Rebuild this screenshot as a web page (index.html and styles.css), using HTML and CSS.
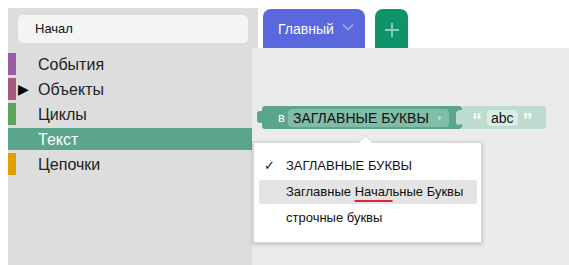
FILE: index.html
```html
<!DOCTYPE html>
<html>
<head>
<meta charset="UTF-8">
<title>Blocks editor</title>
<link rel="stylesheet" href="styles.css">
</head>
<body>
<div class="app">
  <div class="top">
    <div class="search-area">
      <div class="search">Начал</div>
    </div>
    <div class="tabs">
      <div class="tab tab-main">Главный
        <svg class="chev" width="12" height="8" viewBox="0 0 12 8"><path d="M1 1.5 L6 6.5 L11 1.5" fill="none" stroke="#a9b0ef" stroke-width="1.4"/></svg>
      </div>
      <div class="tab tab-add">
        <svg width="14" height="14" viewBox="0 0 14 14"><path d="M7 0 V14 M0 7 H14" stroke="#8fd3b9" stroke-width="1.8"/></svg>
      </div>
    </div>
  </div>
  <div class="main">
    <div class="toolbox">
      <div class="cat cat-events">События</div>
      <div class="cat cat-objects"><span class="arrow">&#9654;</span>Объекты</div>
      <div class="cat cat-loops">Циклы</div>
      <div class="cat cat-text selected">Текст</div>
      <div class="cat cat-chains">Цепочки</div>
    </div>
    <div class="workspace">
      <div class="block">
        <div class="block-tab"></div>
        <span class="label">в</span>
        <span class="dropdown">ЗАГЛАВНЫЕ БУКВЫ<span class="caret">&#9662;</span></span>
        <div class="slot"></div>
        <div class="text-block">
          <div class="text-tab"></div>
          <span class="quote">&#8220;</span>
          <span class="field">abc</span>
          <span class="quote">&#8221;</span>
        </div>
      </div>
      <div class="menu">
        <div class="menu-arrow"></div>
        <div class="item"><span class="check">&#10003;</span>ЗАГЛАВНЫЕ БУКВЫ</div>
        <div class="item hover">Заглавные <span class="match">Начал</span>ьные Буквы</div>
        <div class="item">строчные буквы</div>
      </div>
    </div>
  </div>
</div>
</body>
</html>
```

FILE: styles.css
```css
html, body {
	margin: 0;
	height: 100%;
	background-color: #fff;
	font-family: "Liberation Sans", Arial, Helvetica, sans-serif;
}

.app {
	display: flex;
	flex-direction: column;
	height: 100%;
	padding: 8px 0 0 8px;
	box-sizing: border-box;
}

/* top row: search + tabs */
.top {
	display: flex;
	height: 40px;
}

.search-area {
	width: 250px;
	background-color: #ddd;
	padding: 7px 10px 5px 10px;
	box-sizing: border-box;
}

.search {
	height: 28px;
	line-height: 28px;
	background-color: #f4f4f4;
	border-radius: 5px;
	padding-left: 17px;
	font-size: 13px;
	color: #111;
}

.tabs {
	display: flex;
	gap: 10px;
	margin-left: 5px;
	padding-top: 1px;
}

.tab {
	height: 39px;
	border-radius: 8px 8px 0 0;
	display: flex;
	align-items: center;
	box-sizing: border-box;
}

.tab-main {
	width: 102px;
	background-color: #5b67dd;
	color: #fff;
	font-size: 14px;
	padding-left: 15px;
}

.chev {
	margin-left: 8px;
	margin-top: -3px;
}

.tab-add {
	width: 33px;
	background-color: #0e936b;
	justify-content: center;
	padding-top: 2px;
}

/* bottom row: toolbox + workspace */
.main {
	flex: 1;
	display: flex;
}

.toolbox {
	width: 244px;
	background-color: #ddd;
	padding-top: 5px;
}

.cat {
	height: 22px;
	line-height: 23px;
	margin-bottom: 3px;
	padding-left: 22px;
	border-left: 8px solid;
	font-size: 16px;
	color: #222;
	position: relative;
}

.cat-events { border-color: #995ba5; }
.cat-objects { border-color: #a55b80; }
.cat-loops { border-color: #5ba55b; }
.cat-chains { border-color: #e0a100; }

.cat.selected {
	border-color: #5ba58c;
	background-color: #5ba58c;
	color: #fff;
}

.arrow {
	position: absolute;
	left: 2px;
	font-size: 14px;
	color: #000;
}

.workspace {
	flex: 1;
	background-color: #ebebeb;
	position: relative;
}

/* block on the canvas */
.block {
	position: absolute;
	left: 10px;
	top: 58px;
	height: 23px;
	width: 200px;
	background-color: #5ba58c;
	border-radius: 3px;
	display: flex;
	align-items: center;
}

.block-tab {
	position: absolute;
	left: -5px;
	top: 5px;
	width: 6px;
	height: 12px;
	background-color: #5ba58c;
	border-radius: 3px 0 0 3px;
}

.label {
	color: #fff;
	font-size: 13px;
	margin-left: 16px;
	width: 10px;
}

.dropdown {
	height: 18px;
	line-height: 18px;
	width: 161px;
	box-sizing: border-box;
	background-color: #80bca8;
	border-radius: 4px;
	padding-left: 5px;
	font-size: 14px;
	color: #111;
	position: relative;
}

.caret {
	position: absolute;
	right: 7px;
	font-size: 9px;
	color: #b4dccd;
}

.slot {
	width: 4px;
	height: 14px;
	margin-left: 7px;
	border-radius: 3px 0 0 3px;
	background-color: #c0ddd2;
}

.text-block {
	position: absolute;
	left: 200px;
	top: 0;
	width: 84px;
	height: 23px;
	background-color: #bddccf;
	border-radius: 0 3px 3px 0;
	display: flex;
	align-items: center;
	gap: 5px;
	padding-left: 10px;
	box-sizing: border-box;
}

.text-tab {
	position: absolute;
	left: -5px;
	top: 4px;
	width: 5px;
	height: 14px;
	background-color: #bddccf;
	border-radius: 3px 0 0 3px;
}

.quote {
	color: #fff;
	font-size: 20px;
	font-weight: bold;
	line-height: 23px;
	margin-top: 6px;
}

.field {
	height: 16px;
	line-height: 16px;
	padding: 0 4px;
	background-color: #dcede6;
	border-radius: 4px;
	font-size: 14px;
	color: #111;
}

/* dropdown menu */
.menu {
	position: absolute;
	left: 1px;
	top: 94px;
	width: 229px;
	box-sizing: border-box;
	padding: 11px 4px 10px 5px;
	background-color: #fff;
	border: 1px solid #d6d6d6;
	box-shadow: 0 1px 4px rgba(0, 0, 0, 0.25);
	font-size: 13px;
	color: #111;
}

.menu-arrow {
	position: absolute;
	left: 106px;
	top: -6px;
	width: 10px;
	height: 10px;
	background-color: #fff;
	border-left: 1px solid #d6d6d6;
	border-top: 1px solid #d6d6d6;
	transform: rotate(45deg);
}

.item {
	height: 24px;
	line-height: 24px;
	margin-bottom: 2px;
	padding-left: 27px;
	position: relative;
}

.item.hover {
	background-color: #e4e4e4;
}

.check {
	position: absolute;
	left: 5px;
}

.match {
	text-decoration: underline;
	text-decoration-color: #e3242b;
	text-decoration-thickness: 2px;
	text-underline-offset: 4px;
}
```
